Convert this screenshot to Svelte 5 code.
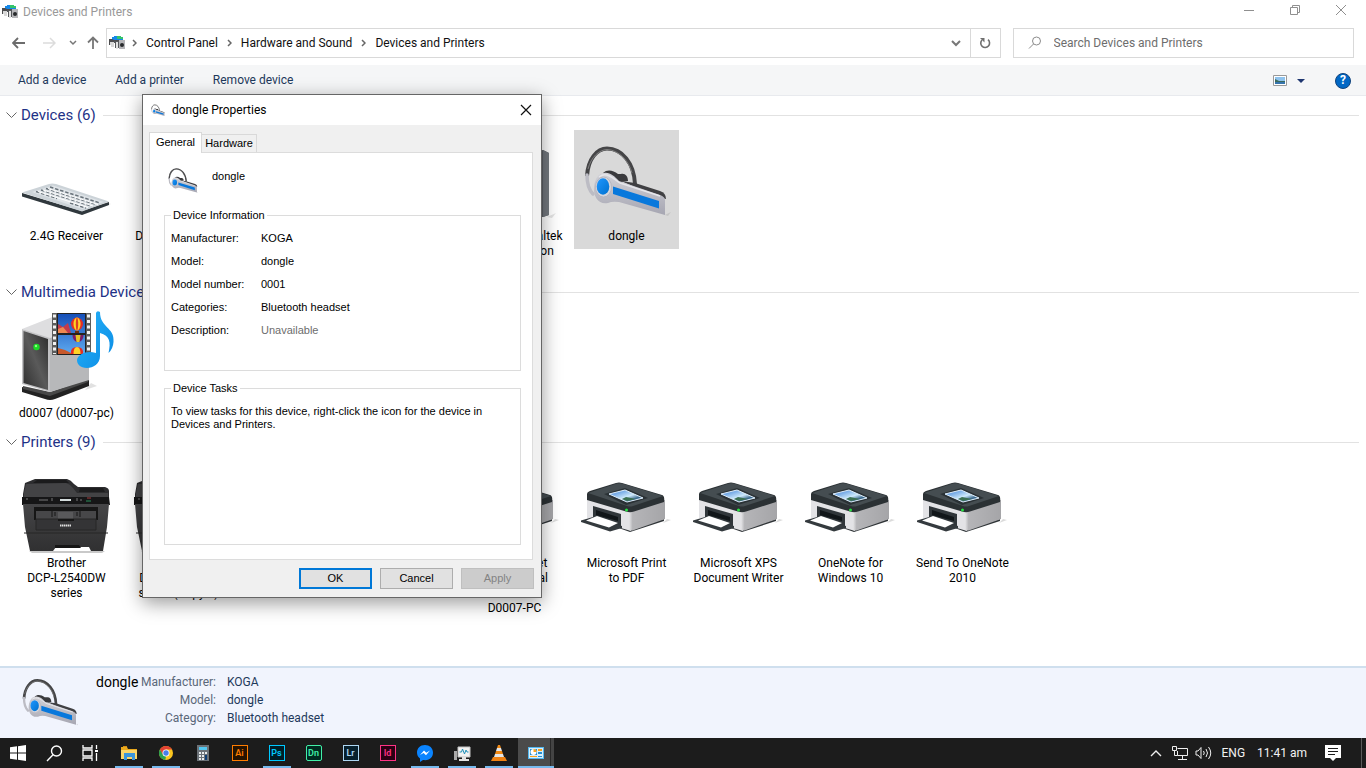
<script>
  const menu = ['Add a device', 'Add a printer', 'Remove device'];
  const crumbs = ['Control Panel', 'Hardware and Sound', 'Devices and Printers'];

  const groups = [
    {
      title: 'Devices (6)',
      items: [
        { icon: 'keyboard', lines: ['2.4G Receiver'] },
        { icon: 'none', lines: ['DELL UltraSharp'] },
        { icon: 'none', lines: [] },
        { icon: 'none', lines: [] },
        { icon: 'speaker', lines: ['Speakers (Realtek', 'High Definition', 'Audio)'] },
        { icon: 'headset', lines: ['dongle'], selected: true }
      ]
    },
    {
      title: 'Multimedia Devices (1)',
      items: [{ icon: 'media', lines: ['d0007 (d0007-pc)'] }]
    },
    {
      title: 'Printers (9)',
      items: [
        { icon: 'brother', lines: ['Brother', 'DCP-L2540DW', 'series'] },
        { icon: 'brother', lines: ['Brother', 'DCP-L2540DW', 'series (Copy 1)'] },
        { icon: 'printer', lines: [] },
        { icon: 'printer', lines: [] },
        { icon: 'printer', lines: ['HP LaserJet', 'Professional', 'P1102 on', 'D0007-PC'] },
        { icon: 'printer', lines: ['Microsoft Print', 'to PDF'] },
        { icon: 'printer', lines: ['Microsoft XPS', 'Document Writer'] },
        { icon: 'printer', lines: ['OneNote for', 'Windows 10'] },
        { icon: 'printer', lines: ['Send To OneNote', '2010'] }
      ]
    }
  ];

  const info = [
    ['Manufacturer:', 'KOGA'],
    ['Model:', 'dongle'],
    ['Model number:', '0001'],
    ['Categories:', 'Bluetooth headset'],
    ['Description:', 'Unavailable']
  ];

  const details = [
    ['Manufacturer:', 'KOGA'],
    ['Model:', 'dongle'],
    ['Category:', 'Bluetooth headset']
  ];

  const apps = [
    { id: 'explorer', label: 'File Explorer', open: true },
    { id: 'chrome', label: 'Chrome', open: true },
    { id: 'calc', label: 'Calculator' },
    { id: 'adobe', label: 'Illustrator', text: 'Ai', tone: 'ai' },
    { id: 'adobe', label: 'Photoshop', text: 'Ps', tone: 'ps', open: true },
    { id: 'adobe', label: 'Dimension', text: 'Dn', tone: 'dn' },
    { id: 'adobe', label: 'Lightroom', text: 'Lr', tone: 'lr' },
    { id: 'adobe', label: 'InDesign', text: 'Id', tone: 'id' },
    { id: 'messenger', label: 'Messenger', open: true },
    { id: 'monitor', label: 'System Monitor', open: true },
    { id: 'vlc', label: 'VLC', open: true },
    { id: 'control', label: 'Control Panel', open: true, active: true }
  ];
</script>

{#snippet headset(size, box)}
  <svg width={size[0]} height={size[1]} viewBox={box} aria-hidden="true">
    <defs>
      <linearGradient id="hs-body" x1="0" y1="0" x2="0" y2="1">
        <stop offset="0" stop-color="#d2d2d8" /><stop offset="1" stop-color="#a6a6b2" />
      </linearGradient>
      <linearGradient id="hs-blue" x1="0" y1="0" x2="1" y2="1">
        <stop offset="0" stop-color="#1f97ff" /><stop offset="1" stop-color="#0071cf" />
      </linearGradient>
    </defs>
    <path d="M86 82l6-3-3 4z" fill="#777" opacity=".2" />
    <path d="M8 43C9 26 18 15.500 28 15.500 43 15.500 55 30 56 51" fill="none" stroke="#454547" stroke-width="4" />
    <path d="M9 36C12 24 20 17 28 16.500 40 17 50 28 53 40" fill="none" stroke="#808080" stroke-width="1" />
    <path d="M8 42C8 51 10 57 14 61" fill="none" stroke="#bcbcc4" stroke-width="3.500" stroke-linecap="round" />
    <path d="M24 40C28 36 34 37 39 41L42 41C46 40 49 43 49 48L35 50Z" fill="#3a3a3d" />
    <path d="M42 48L56 50 81 58Q87 60 87 66L81 65Z" fill="#404043" />
    <path d="M25 40C31 39 35 43 40 48L81 62Q86 64 86 67V82L40 69Q33 68 29 70C20 72 14 64 15 54 16 45 20 40 25 40Z" fill="url(#hs-body)" />
    <path d="M20 44C28 38 35 46 41 50L81 63" fill="none" stroke="#e6e6ea" stroke-width="1.500" />
    <path d="M34 53.500L80 68V75.500L34 61Z" fill="#0878dc" />
    <ellipse cx="24.500" cy="54" rx="8" ry="10" fill="#d6d6dc" stroke="#b3b3bc" stroke-width=".8" />
    <ellipse cx="24" cy="53.500" rx="6.300" ry="8.300" fill="url(#hs-blue)" />
  </svg>
{/snippet}

{#snippet windowIcon()}
  <svg width="16" height="14" viewBox="0 0 16 14" aria-hidden="true">
    <path d="M3 3V1h2V0h7v1h2v3H3z" fill="#1487e8" />
    <path d="M8 0h4v1h2v2H8z" fill="#35c46a" />
    <path d="M0 3h3l2 1h6v2H1v3H0z" fill="#4d4d4f" />
    <path d="M1 6h4v5H2V9H1z" fill="#d8d8d8" /><path d="M5 5h5v7H6V7H5z" fill="#55575a" />
    <path d="M7 6h2v7H7z" fill="#e2e2e2" />
    <path d="M10 4h6v9h-6z" fill="#b5b5b8" /><circle cx="13" cy="9" r="2" fill="#282a2c" />
  </svg>
{/snippet}

{#snippet deviceIcon(kind)}
  {#if kind === 'headset'}
    {@render headset([96, 96], '0 0 96 96')}
  {:else}
    <svg width="96" height="96" viewBox="0 0 96 96" aria-hidden="true">
      {#if kind === 'keyboard'}
        <path d="M63 82L92 71 84 68 60 78z" fill="#999" opacity=".25" />
        <path d="M3 60L63 78 90 69V72L63 82 3 63.500Z" fill="#30383d" />
        <path d="M3 59.500L30 51Q33 50 37 51L90 68.500 63 78.500Z" fill="#ccd3d8" />
        <path d="M13 59L34 52.500 85 69 63 76Z" fill="#dfe4e8" />
        <g fill="none" stroke="#68727a" stroke-width="1.500" stroke-dasharray="3.500 1.800">
          <path d="M31 54L81 70" /><path d="M27 55.500L77 71.500" /><path d="M22 57L72 73" />
          <path d="M17 58.500L38 65.500" /><path d="M51 70L67 75" />
        </g>
        <g fill="none" stroke="#fff" stroke-width="1">
          <path d="M29 55.500L79 71.500" /><path d="M24 57L74 73" /><path d="M19 58.500L69 74.500" />
        </g>
      {:else if kind === 'speaker'}
        <path d="M80 84l9-4-4 5z" fill="#777" opacity=".2" />
        <path d="M40 22L76 17 82 20V82L76 84H40Z" fill="#5c6066" />
        <path d="M76 17L82 20V82L76 84Z" fill="#74797f" />
      {:else if kind === 'media'}
        <defs>
          <linearGradient id="pc-front" x1="1" y1="0" x2="0" y2="1">
            <stop offset="0" stop-color="#2a2a2a" /><stop offset=".5" stop-color="#5a5a5a" /><stop offset="1" stop-color="#2e2e2e" />
          </linearGradient>
          <linearGradient id="note" x1="0" y1="0" x2="1" y2="1">
            <stop offset="0" stop-color="#29b4fa" /><stop offset="1" stop-color="#0a8be4" />
          </linearGradient>
          <linearGradient id="film-sky" x1="0" y1="0" x2="0" y2="1">
            <stop offset="0" stop-color="#164fb8" /><stop offset="1" stop-color="#5eaaf0" />
          </linearGradient>
        </defs>
        <path d="M66 80l12-4-6-3z" fill="#888" opacity=".25" />
        <path d="M3 77L30 84 70 70V76L36 89Q31 91 26 89L3 82Z" fill="#222" />
        <path d="M4 76L31 82 69 69V72L31 86 4 79Z" fill="#484848" />
        <path d="M3 19L36 6 70 14V28L31 29Z" fill="#dedee0" />
        <path d="M31 28L70 15V70L31 82Z" fill="#b7b8ba" />
        <path d="M3 19L31 28V82L3 74Z" fill="#c2c2c4" />
        <path d="M4.500 21L29 29V80L4.500 73Z" fill="url(#pc-front)" />
        <circle cx="17.500" cy="37" r="3.200" fill="#1cda26" /><circle cx="17" cy="36" r="1.200" fill="#8dff83" />
        <path d="M33 3H72V45H33Z" fill="#5c5c5c" />
        <path d="M38 3H67V45H38Z" fill="#222" />
        <path d="M39 4H66V23H39ZM39 25H66V44H39Z" fill="url(#film-sky)" />
        <path d="M39 23V14L44 17 49 13 52 23Z" fill="#c23b4c" /><path d="M39 19l5-2 5 6H39z" fill="#ef8950" />
        <path d="M39 44V38l7 2 8 4z" fill="#c7592c" />
        <g>
          <ellipse cx="58" cy="14" rx="6" ry="6.500" fill="#e52d24" /><ellipse cx="58" cy="14" rx="3.500" ry="6.500" fill="#ffd326" /><ellipse cx="58" cy="14" rx="1.200" ry="6.500" fill="#df3f23" />
          <path d="M56 21h4v2h-4z" fill="#6b2e12" />
          <path d="M53.500 25h11q0 5-4 7h-3q-4-2-4-7z" fill="#7a1e68" /><path d="M56.500 25h5l-1 7h-3z" fill="#e6c227" />
          <path d="M52 44q-1-7 6-7t6 7z" fill="#e52d24" /><path d="M54.500 44q0-7 3.500-7t3.500 7z" fill="#ffd326" />
        </g>
        <path d="M35.500 4.500V44M69.500 4.500V44" stroke="#f1f1f1" stroke-width="3" stroke-dasharray="3 2.500" />
        <path d="M77 3Q78 0 81 2C81 18 96 17 94.500 32Q94 39 89.500 43C92 32 91 26 81 23V46C81 54 74 58 68 58 61 58 58 54 58 50 59 44 68 40 77 43Z" fill="url(#note)" />
      {:else if kind === 'brother'}
        <defs>
          <linearGradient id="br-body" x1="0" y1="0" x2="0" y2="1">
            <stop offset="0" stop-color="#454547" /><stop offset="1" stop-color="#303031" />
          </linearGradient>
        </defs>
        <path d="M10 91h76l-3 2H13z" fill="#777" opacity=".4" />
        <path d="M6 23L16 19H48Q52 20 55 24L59 27H86Q90 28 90 31V44H4V34Z" fill="#2d2d2f" />
        <path d="M7 24L47 23Q51 24 54 28L58 33H89V37H5V33Z" fill="#434345" />
        <path d="M18 20H47L50 23H14Z" fill="#1b1b1c" />
        <path d="M61 28H84L86 32H60Z" fill="#1d1d1e" />
        <path d="M3 37H90L91 45H3Z" fill="#161617" />
        <path d="M4 44H90L88 67 84 91H72L70 87H37L34 91H11L6 67Z" fill="url(#br-body)" />
        <path d="M15 47H79V60H15Z" fill="#161616" /><path d="M17 51H77V59H17Z" fill="#474749" />
        <path d="M39 52H54V59H39Z" fill="#59595b" /><path d="M33 51V57M61 51V57M36 52V56M58 52V56" stroke="#161616" />
        <path d="M17 59H77V70H17Z" fill="#343436" stroke="#262627" />
        <path d="M5 73H89" stroke="#262627" /><path d="M39 59H55V61H39Z" fill="#161616" />
        <path d="M36 85H60L62 88H36Z" fill="#151515" />
        <path d="M41 39H52V41H41Z" fill="#d4dcdc" />
        <path d="M7 39h2M20 40h9M33 38v3M58 38v3M61 40h2" stroke="#767678" />
        <path d="M68 38h4" stroke="#a33b3d" /><path d="M67 41h5" stroke="#2b8f5c" />
        <path d="M41 65.500H52" stroke="#dfdfdf" stroke-width="2" stroke-dasharray="1.500 .5" />
      {:else if kind === 'printer'}
        <defs>
          <linearGradient id="pr-side" x1="0" y1="0" x2="1" y2="0">
            <stop offset="0" stop-color="#e6e6e8" /><stop offset=".1" stop-color="#b5b5b8" /><stop offset="1" stop-color="#a5a5a8" />
          </linearGradient>
          <linearGradient id="pr-screen" x1="0" y1="0" x2="1" y2="1">
            <stop offset="0" stop-color="#2b74d4" /><stop offset=".55" stop-color="#cde9fb" /><stop offset=".75" stop-color="#39678c" /><stop offset="1" stop-color="#7fb7e4" />
          </linearGradient>
        </defs>
        <path d="M84 63l8-3-4-1z" fill="#888" opacity=".3" />
        <path d="M34 66L51 72 85 61V59L52 69 36 64Z" fill="#303538" />
        <path d="M8 37L52 50V71L8 58Z" fill="#e3e3e6" />
        <path d="M50 50L86 40V59L55 70Q52 71 50 70Z" fill="url(#pr-side)" />
        <path d="M14 46L42 54V67L14 58Z" fill="#30363a" />
        <path d="M17 50L39 57V61L17 55Z" fill="#111619" />
        <path d="M8 34Q8 32 11 31L37 23Q40 22 43 23L83 35Q86 36 85 42L55 51.500Q51 53 47 51.500L8 40Z" fill="#2b3134" />
        <path d="M9 33L38 23.500Q40 23 43 23.500L84 36 54 46Q51 47 48 46Z" fill="#454d51" />
        <path d="M25 34L46 28 69 38 47 45Z" fill="#2a3135" />
        <path d="M30 34L46 30 64 38 48 42Z" fill="url(#pr-screen)" stroke="#dfeffc" stroke-width="1" />
        <path d="M43 39l4-2 5 1 5 1-9 2z" fill="#3c7153" />
        <path d="M2 60.500L14 57 43 66V68L31 71.500 2 62Z" fill="#343a3e" />
        <path d="M7 60.500L18 56 39 63 30 67.500Z" fill="#fff" />
        <circle cx="47.500" cy="50" r="1.500" fill="#28e043" />
      {/if}
    </svg>
  {/if}
{/snippet}

<div class="desktop">
  <div class="explorer">
    <header class="titlebar">
      {@render windowIcon()}
      <span class="caption">Devices and Printers</span>
      <div class="controls">
        <button aria-label="Minimize"><svg width="12" height="12" viewBox="0 0 12 12"><path d="M1 6.500H11" /></svg></button>
        <button aria-label="Restore"><svg width="12" height="12" viewBox="0 0 12 12"><path d="M1.500 3.500h7v7h-7zM3.500 3.500v-2h7v7h-2" /></svg></button>
        <button aria-label="Close"><svg width="12" height="12" viewBox="0 0 12 12"><path d="M1 1L11 11M11 1L1 11" /></svg></button>
      </div>
    </header>

    <nav class="navrow" aria-label="Location">
      <div class="history">
        <button aria-label="Back"><svg width="14" height="12" viewBox="0 0 14 12"><path d="M1 6H13M6 1L1 6l5 5" stroke="#6c6c6c" stroke-width="1.800" fill="none" /></svg></button>
        <button aria-label="Forward"><svg width="14" height="12" viewBox="0 0 14 12"><path d="M1 6H13M8 1l5 5-5 5" stroke="#dcdcdc" stroke-width="1.500" fill="none" /></svg></button>
        <button aria-label="Recent locations"><svg width="8" height="6" viewBox="0 0 8 6"><path d="M1 1l3 3 3-3" stroke="#777" stroke-width="1.500" fill="none" /></svg></button>
        <button aria-label="Up"><svg width="12" height="14" viewBox="0 0 12 14"><path d="M6 13V1.500M1 6.500l5-5 5 5" stroke="#777" stroke-width="1.800" fill="none" /></svg></button>
      </div>
      <div class="address">
        <div class="place">{@render windowIcon()}</div>
        {#each crumbs as crumb}
          <svg class="sep" width="5" height="8" viewBox="0 0 5 8"><path d="M1 1l3 3-3 3" stroke="#666" stroke-width="1.500" fill="none" /></svg>
          <a href="#top">{crumb}</a>
        {/each}
        <button class="drop" aria-label="Previous locations"><svg width="10" height="7" viewBox="0 0 10 7"><path d="M1 1l4 4 4-4" stroke="#777" stroke-width="2" fill="none" /></svg></button>
        <button class="refresh" aria-label="Refresh"><svg width="12" height="12" viewBox="0 0 12 12"><path d="M9 2.700A4.400 4.400 0 1 1 3 3" stroke="#707070" stroke-width="1.600" fill="none" /><path d="M1 1h4.500v4.500z" fill="#707070" /></svg></button>
      </div>
      <label class="search">
        <svg width="14" height="14" viewBox="0 0 14 14" aria-hidden="true"><circle cx="8.500" cy="5" r="4" fill="none" stroke="#8b8b8b" /><path d="M5.500 8L1 12.500" stroke="#8b8b8b" /></svg>
        <input type="text" aria-label="Search" placeholder="Search Devices and Printers" />
      </label>
    </nav>

    <div class="commands">
      {#each menu as item}<button>{item}</button>{/each}
      <div class="views">
        <button aria-label="Change view"><svg width="14" height="11" viewBox="0 0 14 11"><path d="M.5.500h13v10H.5z" fill="#fff" stroke="#999" /><path d="M2 2h10v7H2z" fill="#8fc3ee" /><path d="M2 4l4 2h6v1H2z" fill="#3b6a5e" /><path d="M2 7h10v2H2z" fill="#3674ad" /></svg></button>
        <button aria-label="More views"><svg width="8" height="4" viewBox="0 0 8 4"><path d="M0 0h8L4 4z" fill="#1e3670" /></svg></button>
        <button aria-label="Help" class="help">?</button>
      </div>
    </div>

    <main>
      {#each groups as group}
        <section>
          <h2>
            <svg width="11" height="7" viewBox="0 0 11 7" aria-hidden="true"><path d="M.5.500l5 5 5-5" stroke="#666" fill="none" /></svg>
            {group.title}
          </h2>
          <div class="items">
            {#each group.items as item}
              <div class="item" class:selected={item.selected}>
                {@render deviceIcon(item.icon)}
                {#each item.lines as line}<span>{line}</span>{/each}
              </div>
            {/each}
          </div>
        </section>
      {/each}
    </main>

    <footer class="details">
      {@render headset([56, 50], '5 12 84 75')}
      <strong>dongle</strong>
      <dl>
        {#each details as [term, value]}<dt>{term}</dt><dd>{value}</dd>{/each}
      </dl>
    </footer>
  </div>

  <div class="taskbar">
    <button class="sys" aria-label="Start"><svg width="16" height="16" viewBox="0 0 16 16" fill="#fff"><path d="M0 2.300L7 1.300V7.500H0zM8 1.200L16 0V7.500H8zM0 8.500H7V14.700L0 13.700zM8 8.500H16V16L8 14.800z" /></svg></button>
    <button class="sys" aria-label="Search"><svg width="17" height="17" viewBox="0 0 17 17" fill="none" stroke="#fff" stroke-width="1.400"><circle cx="10.500" cy="6" r="5" /><path d="M7 9.700L1 16" /></svg></button>
    <button class="sys" aria-label="Task view"><svg width="17" height="16" viewBox="0 0 17 16" fill="none" stroke="#fff" stroke-width="1.300"><path d="M1 0v3h9V0M1 16v-3h9v3M1 5h9v6H1zM14.500 0v4M14.500 8v8" /><path d="M13 5h3v2h-3z" fill="#fff" stroke="none" /></svg></button>
    <div class="apps">
      {#each apps as app}
        <button class:open={app.open} class:active={app.active} aria-label={app.label}>
          {#if app.id === 'adobe'}
            <span class="adobe {app.tone}">{app.text}</span>
          {:else}
            <svg width="18" height="18" viewBox="0 0 18 18">
              {#if app.id === 'explorer'}
                <path d="M1 3h6l1 2h9v4H1z" fill="#eaa91d" /><path d="M1 6h16v9H1z" fill="#fbd569" /><path d="M4 9h11v7h-3v-3H7v3H4z" fill="#3a95dc" /><path d="M3 2h4v1H3z" fill="#cf8c13" />
              {:else if app.id === 'chrome'}
                <circle cx="9" cy="9" r="7" fill="#fbc61f" /><path d="M2.900 5.500A7 7 0 0 1 15.100 5.500H9L5.500 11z" fill="#e34133" /><path d="M2.900 5.500L6 10.800 9 12.500 8.300 16A7 7 0 0 1 2.900 5.500z" fill="#2ca14f" /><circle cx="9" cy="9" r="3.500" fill="#fff" /><circle cx="9" cy="9" r="2.700" fill="#477fe9" />
              {:else if app.id === 'calc'}
                <path d="M3 1h12v16H3z" fill="#6c7278" /><path d="M5 3h8v3H5z" fill="#53c7f1" /><path d="M5 8h2v2H5zM8 8h2v2H8zM5 11h2v2H5zM8 11h2v2H8zM5 14h2v2H5zM8 14h2v2H8zM11 8h2v2h-2z" fill="#e9edef" /><path d="M11 11h2v5h-2z" fill="#103f75" />
              {:else if app.id === 'messenger'}
                <path d="M9 1C4 1 1 4.500 1 8.500c0 2.500 1 4.500 3 6V18l3-2c7 1 10-3 10-7.500C17 4 13.500 1 9 1z" fill="#0a84ff" /><path d="M4 11l4-4.500 2.300 2.200L14 6.500l-4 4.700-2.400-2.300z" fill="#fff" />
              {:else if app.id === 'monitor'}
                <path d="M1 7h3v9H1z" fill="#aaa" /><path d="M5 3h12v10H5z" fill="#f2f2f2" stroke="#c4c4c4" /><path d="M6.500 8h2l1-3 2 5 1.500-4 1 2h1.500" fill="none" stroke="#2592bb" /><path d="M9 13h4v2h3v2H6v-2h3z" fill="#e3e3e3" />
              {:else if app.id === 'vlc'}
                <path d="M8 1h2l1 3H7z" fill="#f28a14" /><path d="M7 4h4l1 3H6z" fill="#e6e6e6" /><path d="M6 7h6l1 3H5z" fill="#f28a14" /><path d="M5 10h8l1 3H4z" fill="#e6e6e6" /><path d="M3 13h12l2 4H1z" fill="#f08213" />
              {:else}
                <path d="M1 3h16v12H1z" fill="#53b7ef" /><path d="M2 4h14v10H2z" fill="#d7effc" /><path d="M3 5h7v6H3z" fill="#278fd1" /><circle cx="6.500" cy="8" r="3" fill="#fff" /><path d="M6.500 8V5a3 3 0 0 1 3 3z" fill="#f7a11c" /><path d="M11 5h4v2h-4z" fill="#f7a11c" /><path d="M11 8h4v2h-4z" fill="#278fd1" /><path d="M3 12h7v1H3z" fill="#f7a11c" /><path d="M11 12h4v1h-4z" fill="#278fd1" />
              {/if}
            </svg>
          {/if}
        </button>
      {/each}
    </div>
    <div class="tray">
      <svg width="12" height="8" viewBox="0 0 12 8"><path d="M1 7l5-5 5 5" stroke="#eee" stroke-width="1.400" fill="none" /></svg>
      <svg width="16" height="14" viewBox="0 0 16 14" fill="none" stroke="#eee"><path d="M5.500 2.500h10v7h-10V5M.5.500h4v4h-4zM2.500 5v4.500h3M10.500 10v3M6 13.500h9" /></svg>
      <svg width="17" height="14" viewBox="0 0 17 14" fill="none" stroke="#eee"><path d="M1 5h2l3-3.500v11L3 9H1zM8.500 5q1.500 2 0 4M11 3q3 4 0 8M13.500 1q4.500 6 0 12" /></svg>
      <span class="lang">ENG</span>
      <time>11:41 am</time>
      <svg class="note" width="16" height="16" viewBox="0 0 16 16"><path d="M0 0h16v13h-5l-3 3-3-3H0z" fill="#fff" /><path d="M3 3.500h10M3 6.500h10M3 9.500h7" stroke="#1c1c1c" /></svg>
    </div>
  </div>

  <div class="dialog" role="dialog" aria-label="dongle Properties">
    <div class="dialog-title">
      {@render headset([14, 13], '5 12 84 75')}
      <span>dongle Properties</span>
      <button aria-label="Close dialog"><svg width="12" height="12" viewBox="0 0 12 12"><path d="M1 1L11 11M11 1L1 11" stroke="#111" stroke-width="1.200" /></svg></button>
    </div>
    <div class="tabs" role="tablist">
      <button role="tab" aria-selected="true" class="current">General</button>
      <button role="tab" aria-selected="false">Hardware</button>
    </div>
    <div class="panel">
      <div class="device">{@render headset([30, 28], '5 12 84 75')}<span>dongle</span></div>
      <fieldset>
        <legend>Device Information</legend>
        <dl>
          {#each info as [term, value]}<dt>{term}</dt><dd class:muted={value === 'Unavailable'}>{value}</dd>{/each}
        </dl>
      </fieldset>
      <fieldset>
        <legend>Device Tasks</legend>
        <p>To view tasks for this device, right-click the icon for the device in Devices and Printers.</p>
      </fieldset>
    </div>
    <div class="actions">
      <button class="default">OK</button>
      <button>Cancel</button>
      <button disabled>Apply</button>
    </div>
  </div>
</div>

<style>
  :global(body) { margin: 0; background: #fff; }
  :global(*) { box-sizing: border-box; }
  button { border: 0; background: none; padding: 0; margin: 0; font: inherit; color: inherit; display: flex; align-items: center; justify-content: center; }
  svg { display: block; flex: none; }
  dl, dd, p, h2 { margin: 0; }

  .desktop { position: relative; display: flex; flex-direction: column; min-height: 100vh; font: 12px/15px Roboto, "Open Sans", sans-serif; color: #000; overflow: hidden; }
  .explorer { flex: 1; display: flex; flex-direction: column; }

  .titlebar { display: flex; align-items: center; height: 24px; padding-left: 2px; gap: 5px; color: #999; }
  .controls { display: flex; margin: 0 2px 0 auto; align-self: flex-start; }
  .controls button { width: 46px; height: 20px; }
  .controls svg { fill: none; stroke: #8f8f8f; }

  .navrow { display: flex; height: 41px; padding: 4px 12px 7px 12px; }
  .history { display: flex; align-items: center; width: 94px; gap: 13px; }
  .history button:nth-child(1) { margin-right: 3px; }
  .history button:nth-child(4) { margin-left: -3px; }
  .address { flex: 1; display: flex; align-items: center; border: 1px solid #d9d9d9; padding-left: 2px; height: 30px; }
  .address a { color: #111; text-decoration: none; }
  .address .place { width: 14px; }
  .address .sep { margin: 0 9px; }
  .address .drop { margin-left: auto; width: 28px; height: 28px; }
  .address .refresh { width: 30px; height: 28px; border-left: 1px solid #d9d9d9; }
  .search { display: flex; align-items: center; width: 25vw; height: 30px; margin-left: 12px; border: 1px solid #d9d9d9; padding-left: 14px; gap: 12px; }
  .search input { flex: 1; min-width: 0; border: 0; padding: 0; font: inherit; background: none; outline: 0; }
  .search input::placeholder { color: #6d6d6d; opacity: 1; }

  .commands { display: flex; align-items: center; gap: 29px; height: 31px; padding: 1px 15px 0 18px; background: #f5f6f7; border-bottom: 1px solid #e8eaee; color: #1e395b; }
  .views { margin-left: auto; display: flex; align-items: center; gap: 10px; }
  .views .help { margin-left: 20px; width: 16px; height: 16px; border-radius: 50%; background: #0067c5; border: 1px solid #11437c; color: #fff; font-weight: 700; }

  main { flex: 1; padding: 6px 7px 0 6px; min-width: 0; }
  h2 { display: flex; align-items: center; gap: 4px; height: 28px; padding-bottom: 2px; font-size: 15px; font-weight: 400; line-height: 20px; color: #1e3287; white-space: nowrap; }
  h2::after { content: ""; flex: 1; height: 1px; background: #e2e2e2; margin-left: 3px; }
  .items { display: flex; gap: 7px; min-height: 122px; padding-left: 8px; align-items: flex-start; }
  .item { width: 105px; flex: none; padding: 3px 0 5px; display: flex; flex-direction: column; align-items: center; white-space: nowrap; }
  .item.selected { background: #d9d9d9; }

  .details { display: flex; height: 72px; padding: 7px 0 0 22px; background: #f1f4fd; border-top: 2px solid #cfdfee; }
  .details > :global(svg) { margin-top: 3px; }
  .details strong { font-size: 14px; font-weight: 400; margin-left: 18px; width: 41px; line-height: 15px; }
  .details dl { display: grid; grid-template-columns: 79px auto; column-gap: 11px; grid-auto-rows: 18px; line-height: 15px; }
  .details dt { text-align: right; color: #5a6779; }
  .details dd { color: #1e395b; }

  .taskbar { display: flex; height: 30px; background: #1c1c1c; color: #f2f2f2; }
  .taskbar .sys { width: 36px; }
  .apps { display: flex; padding-left: 2px; }
  .apps button { width: 37px; border-top: 2px solid transparent; border-bottom: 2px solid transparent; position: relative; }
  .apps .open::after { content: ""; position: absolute; left: 5px; right: 4px; bottom: -2px; height: 2px; background: #76b9ed; }
  .apps .active { background: linear-gradient(90deg, #4b4b4b 32px, #282828 32px, #282828 33px, #444 33px); background-origin: border-box; background-clip: border-box; margin-left: 1px; width: 36px; }
  .apps .active::after { left: 0; right: 0; }
  .adobe { width: 16px; height: 16px; border: 1px solid; display: flex; align-items: center; justify-content: center; font-size: 9px; font-weight: 600; }
  .ai { color: #ff7c00; background: #261300; }
  .ps { color: #00c8ff; background: #001d26; }
  .dn { color: #42f0a8; background: #002a20; border-radius: 2px; }
  .lr { color: #aed7f3; background: #07202d; }
  .id { color: #ff3385; background: #2a0014; }
  .tray { display: flex; align-items: center; gap: 10px; margin-left: auto; padding-right: 4px; white-space: nowrap; }
  .tray svg:nth-of-type(3) { margin-left: -3px; }
  .tray time { margin-left: 2px; }
  .tray .note { margin: 0 20px 0 8px; }
  .tray::after { content: ""; width: 1px; height: 30px; background: #5a5a5a; margin-left: -10px; }

  .dialog { position: absolute; left: 142px; top: 94px; width: 400px; border: 1px solid #666; background: #f0f0f0; box-shadow: 0 5px 18px rgba(0, 0, 0, .4); font: 11px/13px "Liberation Sans", sans-serif; }
  .dialog-title { display: flex; align-items: center; gap: 7px; height: 30px; padding-left: 8px; background: #fff; font: 12px/15px Roboto, "Open Sans", sans-serif; }
  .dialog-title button { margin-left: auto; width: 30px; height: 28px; }
  .tabs { display: flex; align-items: flex-end; padding: 7px 6px 0; }
  .tabs button { height: 18px; width: 55px; border: 1px solid #d9d9d9; border-left: 0; border-bottom: 0; }
  .tabs .current { height: 21px; width: 53px; background: #fff; border-left: 1px solid #d9d9d9; padding-bottom: 1px; margin-bottom: -1px; position: relative; }
  .panel { margin: 0 8px 0 6px; border: 1px solid #dcdcdc; background: #fff; padding: 14px 11px 14px 14px; }
  .device { display: flex; gap: 14px; height: 42px; }
  .device span { padding-top: 3px; }
  .device :global(svg) { margin-left: 4px; }
  fieldset { margin: 0; padding: 10px 6px 0; border: 1px solid #dcdcdc; min-height: 162px; min-width: 0; }
  fieldset + fieldset { margin-top: 11px; min-height: 163px; }
  legend { padding: 0 2px; }
  fieldset dl { display: grid; grid-template-columns: 90px auto; row-gap: 10px; }
  .muted { color: #6d6d6d; }
  .actions { display: flex; justify-content: flex-end; gap: 8px; padding: 8px 7px 8px; }
  .actions button { width: 73px; height: 21px; background: #e1e1e1; border: 1px solid #adadad; }
  .actions .default { border: 2px solid #0078d7; }
  .actions button:disabled { background: #ccc; border-color: #bfbfbf; color: #838383; }
</style>
